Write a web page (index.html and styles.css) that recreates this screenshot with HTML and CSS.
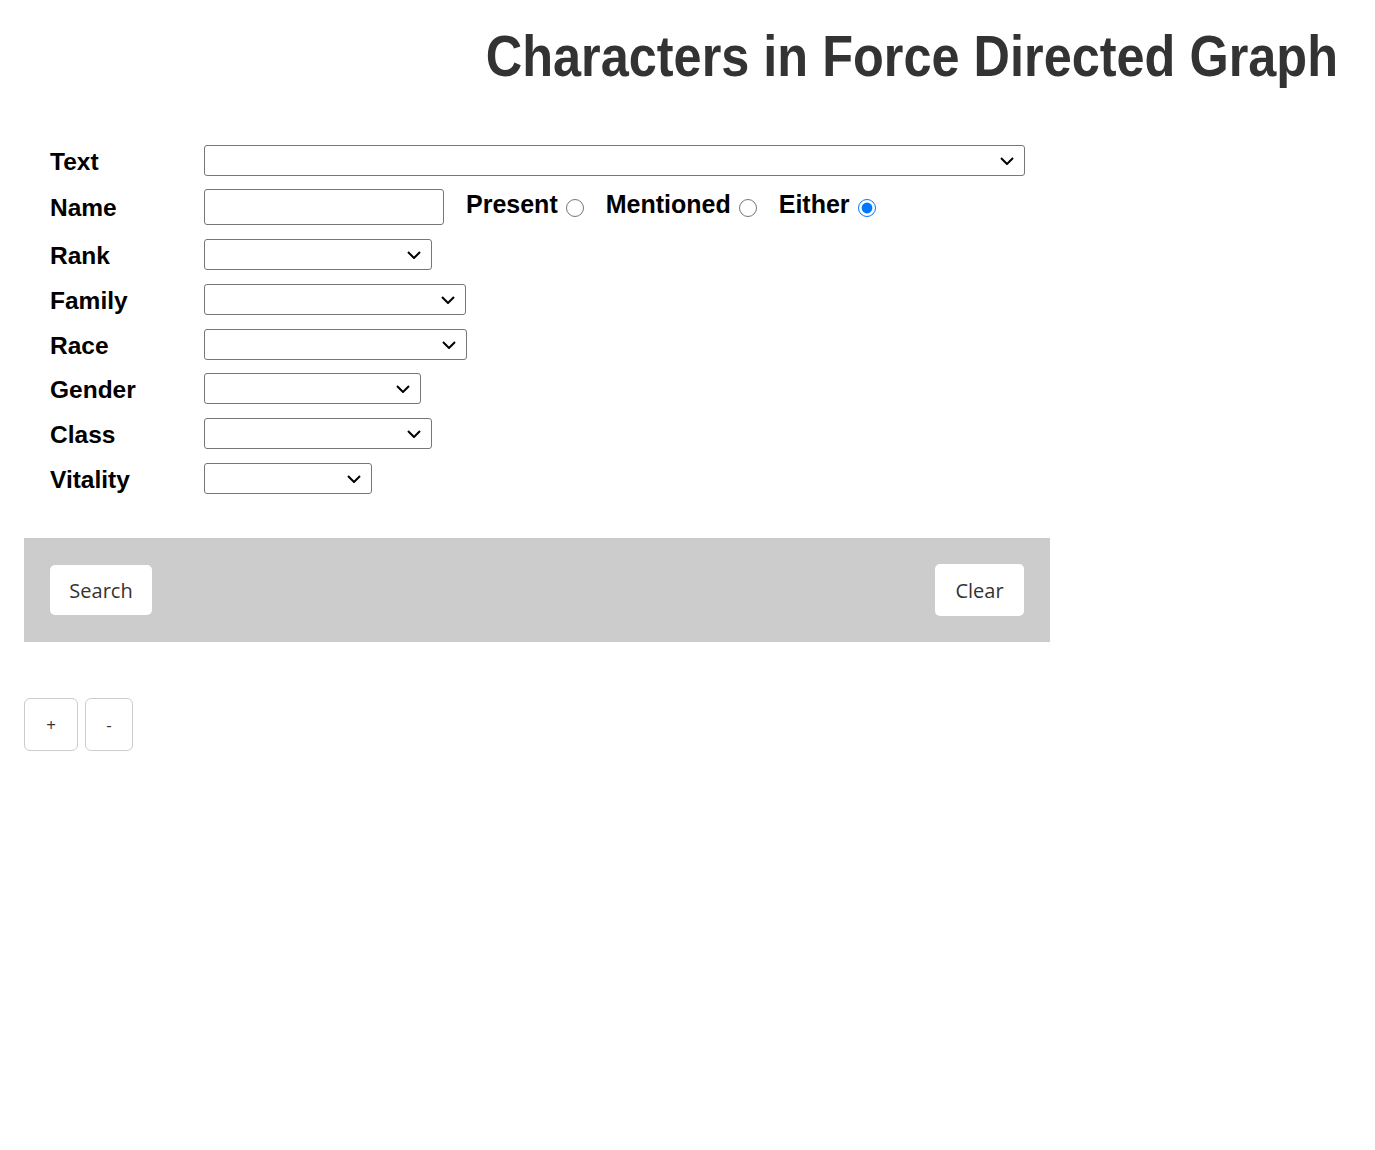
FILE: index.html
```html
<!DOCTYPE html>
<html>
<head>
<meta charset="utf-8">
<link rel="stylesheet" href="styles.css">
</head>
<body>
<h1 class="title"><span class="title-text">Characters in Force Directed Graph</span></h1>
<div class="page">
  <form class="filters">
    <div class="row"><label class="lbl">Text</label><select class="sel w-text"></select></div>
    <div class="row row-name"><label class="lbl">Name</label><input class="inp" type="text">
      <span class="radio-group">
        <label class="rlbl">Present <input type="radio" name="p" class="radio"></label>
        <label class="rlbl">Mentioned <input type="radio" name="p" class="radio"></label>
        <label class="rlbl">Either <input type="radio" name="p" class="radio" checked></label>
      </span>
    </div>
    <div class="row"><label class="lbl">Rank</label><select class="sel w-rank"></select></div>
    <div class="row"><label class="lbl">Family</label><select class="sel w-family"></select></div>
    <div class="row"><label class="lbl">Race</label><select class="sel w-race"></select></div>
    <div class="row row-tight"><label class="lbl">Gender</label><select class="sel w-gender"></select></div>
    <div class="row"><label class="lbl">Class</label><select class="sel w-class"></select></div>
    <div class="row"><label class="lbl">Vitality</label><select class="sel w-vitality"></select></div>
  </form>
  <div class="actions">
    <button class="btn btn-search" type="button">Search</button>
    <button class="btn btn-clear" type="button">Clear</button>
  </div>
  <div class="zoom">
    <button class="zbtn zplus" type="button">+</button>
    <button class="zbtn zminus" type="button">-</button>
  </div>
</div>
</body>
</html>
```
FILE: styles.css
```css
html, body { margin: 0; padding: 0; background: #fff; }
body { font-family: "Liberation Sans", Arial, sans-serif; }

.title {
  margin: 0;
  padding: 24px 37px 0 0;
  text-align: right;
  font-family: "Liberation Sans", Arial, sans-serif;
  font-weight: 700;
  font-size: 57px;
  line-height: 64px;
  color: #333;
}
.title-text {
  display: inline-block;
  transform: scaleX(0.885);
  transform-origin: right center;
}

.page { padding: 0 24px; }

.filters {
  padding: 57px 26px 0 26px;
  display: flex;
  flex-direction: column;
  gap: 14px;
}

.row { display: flex; align-items: center; height: 31px; }
.row-name { height: 36px; margin-top: -1px; }
.row-tight { margin-top: -1px; }

.lbl {
  width: 154px;
  flex: none;
  font-weight: 700;
  font-size: 24.5px;
  color: #000;
  padding-top: 2px;
}

.sel {
  -webkit-appearance: none;
  appearance: none;
  height: 31px;
  font-size: 16px;
  border: 1px solid #767676;
  border-radius: 3px;
  background-color: #fff;
  background-image: url("data:image/svg+xml;utf8,<svg xmlns='http://www.w3.org/2000/svg' width='14' height='8' viewBox='0 0 14 8'><path d='M1 1 L7 7 L13 1' fill='none' stroke='%23000' stroke-width='2'/></svg>");
  background-repeat: no-repeat;
  background-position: right 10px center;
  margin: 0;
}
.w-text { width: 821px; }
.w-rank { width: 228px; }
.w-family { width: 262px; }
.w-race { width: 263px; }
.w-gender { width: 217px; }
.w-class { width: 228px; }
.w-vitality { width: 168px; }

.inp {
  width: 240px;
  height: 36px;
  box-sizing: border-box;
  border: 1px solid #767676;
  border-radius: 3px;
  margin: 0;
  font-size: 16px;
}

.radio-group { display: flex; align-items: center; margin-left: 22px; gap: 22px; margin-top: -5px; }
.rlbl { font-weight: 700; font-size: 25px; color: #000; display: flex; align-items: center; }
.radio { width: 18px; height: 18px; margin: 6px 0 0 8px; }

.actions {
  margin-top: 44px;
  background: #ccc;
  width: 1026px;
  height: 104px;
  box-sizing: border-box;
  padding: 0 26px;
  display: flex;
  align-items: center;
  justify-content: space-between;
}

.btn {
  background: #fff;
  border: none;
  border-radius: 5px;
  font-family: "Open Sans", "Noto Sans", sans-serif;
  font-size: 20px;
  color: #333;
  padding: 0 19px;
}
.btn-search { height: 50px; width: 102px; }
.btn-clear { height: 52px; width: 89px; }

.zoom { display: flex; gap: 7px; margin-top: 56px; }
.zbtn {
  height: 53px;
  background: #fff;
  border: 1px solid #ccc;
  border-radius: 6px;
  font-family: "Open Sans", "Noto Sans", sans-serif;
  font-size: 17px;
  color: #333;
  padding: 0;
}
.zplus { width: 54px; }
.zminus { width: 48px; }
```
